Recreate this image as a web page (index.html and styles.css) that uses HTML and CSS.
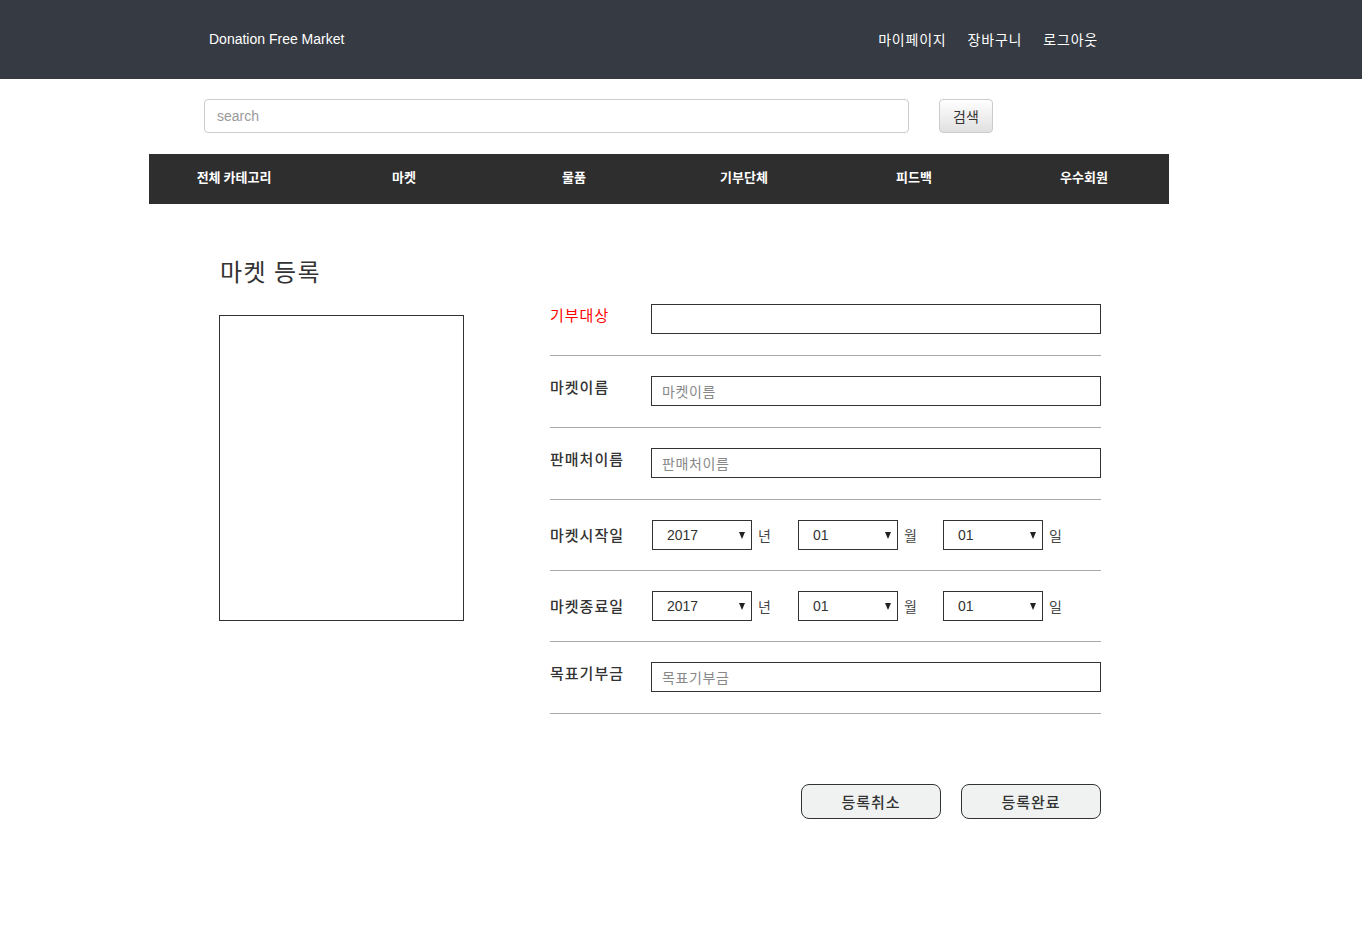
FILE: index.html
```html
<!DOCTYPE html>
<html>
<head>
    <meta charset="utf-8"/>
    <title>마켓 등록 - Donation Free Market</title>
    <link rel="stylesheet" href="styles.css">
</head>
<body>
    <header class="top">
        <div class="top-inner">
            <a class="brand" href="#">Donation Free Market</a>
            <nav class="user-menu">
                <a href="#">마이페이지</a>
                <a href="#">장바구니</a>
                <a href="#">로그아웃</a>
            </nav>
        </div>
    </header>

    <div class="wrap">
        <form class="search">
            <input type="text" class="search-input" placeholder="search">
            <button type="button" class="search-btn">검색</button>
        </form>

        <nav class="gnb">
            <a href="#">전체 카테고리</a>
            <a href="#">마켓</a>
            <a href="#">물품</a>
            <a href="#">기부단체</a>
            <a href="#">피드백</a>
            <a href="#">우수회원</a>
        </nav>

        <main class="content">
            <h2 class="title">마켓 등록</h2>
            <div class="columns">
                <div class="photo"></div>

                <div class="form">
                    <div class="row">
                        <label class="label required">기부대상</label>
                        <input type="text" class="field">
                    </div>
                    <div class="row">
                        <label class="label">마켓이름</label>
                        <input type="text" class="field" placeholder="마켓이름">
                    </div>
                    <div class="row">
                        <label class="label">판매처이름</label>
                        <input type="text" class="field" placeholder="판매처이름">
                    </div>
                    <div class="row row-date">
                        <label class="label">마켓시작일</label>
                        <div class="date">
                            <span class="pick"><span class="sel">2017</span> 년</span>
                            <span class="pick"><span class="sel">01</span> 월</span>
                            <span class="pick"><span class="sel">01</span> 일</span>
                        </div>
                    </div>
                    <div class="row row-date">
                        <label class="label">마켓종료일</label>
                        <div class="date">
                            <span class="pick"><span class="sel">2017</span> 년</span>
                            <span class="pick"><span class="sel">01</span> 월</span>
                            <span class="pick"><span class="sel">01</span> 일</span>
                        </div>
                    </div>
                    <div class="row">
                        <label class="label">목표기부금</label>
                        <input type="text" class="field" placeholder="목표기부금">
                    </div>

                    <div class="actions">
                        <button type="button" class="btn">등록취소</button>
                        <button type="button" class="btn">등록완료</button>
                    </div>
                </div>
            </div>
        </main>
    </div>
</body>
</html>
```

FILE: styles.css
```css
html, body {
    margin: 0;
    padding: 0;
}
body {
    font-family: "Liberation Sans", Arial, "Noto Sans CJK KR", sans-serif;
    color: #333;
    background: #fff;
}
a {
    text-decoration: none;
}

/* top bar */
.top {
    height: 79px;
    background-color: #363a42;
}
.top-inner {
    width: 1020px;
    margin-left: 149px;
    box-sizing: border-box;
    height: 77px;
    padding: 0 71px 0 60px;
    display: flex;
    align-items: center;
    justify-content: space-between;
}
.brand {
    color: #fff;
    font-size: 14px;
}
.user-menu {
    display: flex;
    gap: 21px;
}
.user-menu a {
    color: #fff;
    font-size: 14px;
    font-family: "Noto Sans CJK KR", sans-serif;
    letter-spacing: 0.8px;
}

.wrap {
    width: 1020px;
    margin-left: 149px;
}

/* search */
.search {
    display: flex;
    margin: 20px 0 0 55px;
    gap: 30px;
}
.search-input {
    width: 705px;
    height: 34px;
    box-sizing: border-box;
    border: 1px solid #ccc;
    border-radius: 4px;
    padding: 0 12px;
    font-size: 14px;
    font-family: "Liberation Sans", Arial, sans-serif;
}
.search-input::placeholder {
    color: #999;
}
.search-btn {
    width: 54px;
    height: 34px;
    border: 1px solid #ccc;
    border-radius: 4px;
    background: linear-gradient(#fff, #e0e0e0);
    font-family: "Noto Sans CJK KR", sans-serif;
    font-size: 14px;
    color: #333;
    padding: 0;
}

/* category bar */
.gnb {
    margin-top: 21px;
    height: 50px;
    background-color: #2e2e2e;
    display: grid;
    grid-template-columns: repeat(6, 1fr);
    align-items: center;
}
.gnb a {
    text-align: center;
    color: #fff;
    font-weight: bold;
    font-size: 13px;
    line-height: 16px;
    margin-top: -4px;
    font-family: "Noto Sans CJK KR", sans-serif;
}

/* content */
.content {
    padding-left: 70px;
}
.title {
    margin: 50px 0 0 1px;
    height: 34px;
    line-height: 34px;
    font-size: 24px;
    letter-spacing: 1.5px;
    font-weight: normal;
    font-family: "Noto Sans CJK KR", sans-serif;
    color: #333;
}
.columns {
    display: flex;
    gap: 86px;
}
.photo {
    margin-top: 27px;
    width: 245px;
    height: 306px;
    box-sizing: border-box;
    border: 1px solid #333;
}
.form {
    width: 551px;
    margin-top: -4px;
}
.row {
    display: flex;
    align-items: flex-start;
    padding: 20px 0 21px;
    border-bottom: 1px solid #aaa;
}
.row-date {
    align-items: center;
    padding-bottom: 20px;
}
.label {
    width: 101px;
    flex: none;
    line-height: 22px;
    font-size: 15px;
    font-weight: 500;
    letter-spacing: 1px;
    font-family: "Noto Sans CJK KR", sans-serif;
    color: #333;
}
.label.required {
    color: #f00;
    font-weight: normal;
}
.field {
    width: 450px;
    height: 30px;
    box-sizing: border-box;
    border: 1px solid #333;
    padding: 0 10px;
    font-size: 14px;
    letter-spacing: 0.6px;
    font-family: "Noto Sans CJK KR", sans-serif;
}
.field::placeholder {
    color: #888;
}

.date {
    display: flex;
    margin-left: 1px;
}
.pick {
    width: 146px;
    display: flex;
    align-items: center;
    gap: 6px;
    font-size: 14px;
    font-family: "Noto Sans CJK KR", sans-serif;
    color: #444;
}
.pick:nth-child(2) {
    width: 145px;
}
.pick:last-child {
    width: auto;
}
.sel {
    position: relative;
    width: 100px;
    height: 30px;
    box-sizing: border-box;
    border: 1px solid #333;
    padding-left: 14px;
    line-height: 28px;
    font-family: "Liberation Sans", Arial, sans-serif;
    font-size: 14px;
    color: #333;
    background: #fff;
}
.sel::after {
    content: "";
    position: absolute;
    right: 6px;
    top: 11px;
    border-left: 3.5px solid transparent;
    border-right: 3.5px solid transparent;
    border-top: 7px solid #222;
}

.actions {
    display: flex;
    justify-content: flex-end;
    gap: 20px;
    margin-top: 70px;
}
.btn {
    width: 140px;
    height: 35px;
    border: 1px solid #333;
    border-radius: 8px;
    background: #f0f2f2;
    font-family: "Noto Sans CJK KR", sans-serif;
    font-size: 15px;
    font-weight: 500;
    letter-spacing: 1px;
    color: #333;
    padding: 0;
}
```
